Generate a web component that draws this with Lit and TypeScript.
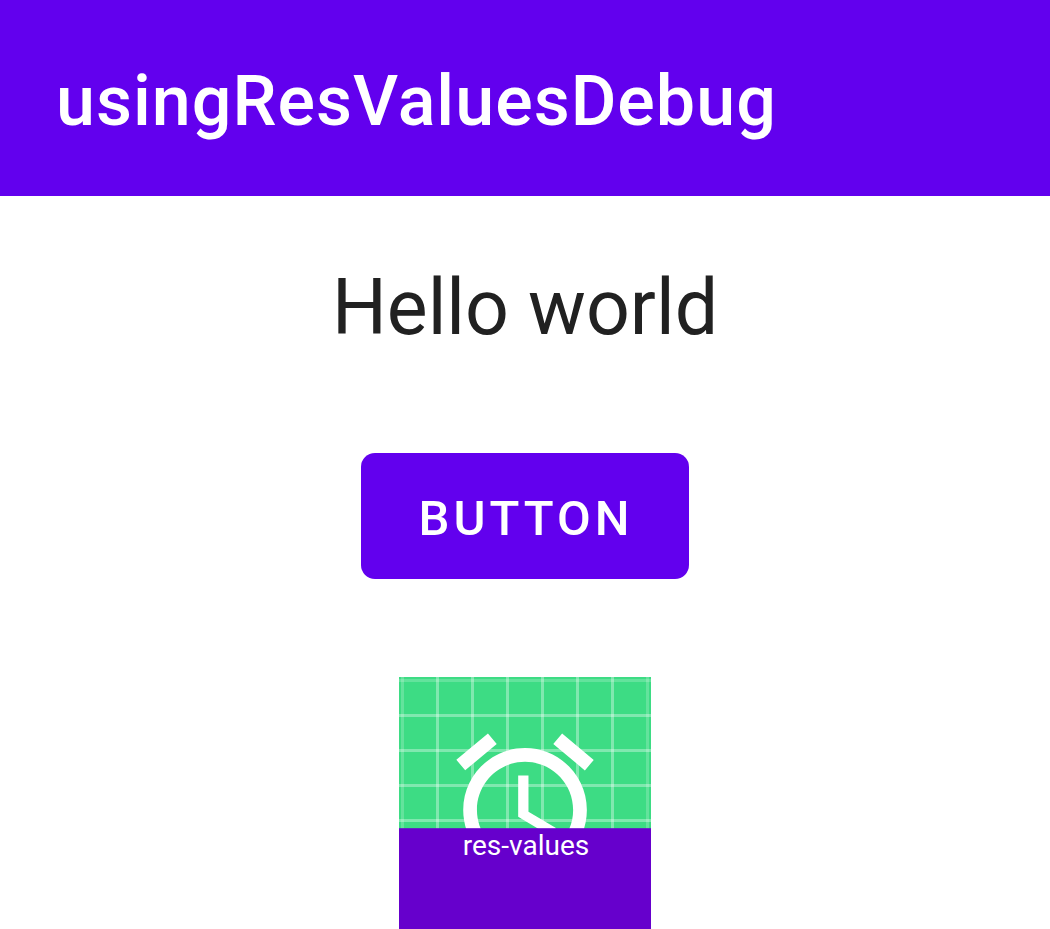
import { LitElement, html, svg, css } from "lit";
import { customElement } from "lit/decorators.js";

// Left or top edge of every stripe of the launcher background grid.
const GRID = [2, 37, 72, 107, 142, 177, 212, 247];

@customElement("launcher-icon")
export class LauncherIcon extends LitElement {
  static styles = css`
    :host {
      display: block;
      width: 252px;
    }
    .art {
      display: block;
      width: 100%;
    }
    .back {
      fill: #3ddc84;
    }
    .grid {
      fill: #ffffff;
      fill-opacity: 0.35;
    }
    .edge {
      fill-opacity: 0.2;
    }
    .clock {
      fill: #ffffff;
    }
    .ribbon {
      fill: #6600cc;
    }
    .label {
      fill: #ffffff;
      font-family: Roboto, "Noto Sans", sans-serif;
      font-size: 28px;
      text-anchor: middle;
    }
  `;

  render() {
    return html`
      <svg class="art" viewBox="0 0 252 252" role="img" aria-label="res-values launcher icon">
        <rect class="back" width="252" height="252" />
        <g class="grid">
          ${GRID.map((p, i) => {
            const edge = i === 0 || i === GRID.length - 1 ? "edge" : "";
            return svg`
              <rect class=${edge} x=${p} y="0" width="3" height="252" />
              <rect class=${edge} x="0" y=${p} width="252" height="3" />
            `;
          })}
        </g>
        <path
          class="clock"
          transform="translate(43.6 43.6) scale(6.87)"
          d="M22 5.72l-4.6-3.86-1.29 1.53 4.6 3.86L22 5.72zM7.88 3.39L6.6 1.86 2 5.71l1.29 1.53 4.59-3.85zM12.5 8H11v6l4.75 2.85.75-1.23-4-2.37V8zM12 4c-4.97 0-9 4.03-9 9s4.02 9 9 9c4.97 0 9-4.03 9-9s-4.03-9-9-9zm0 16c-3.87 0-7-3.13-7-7s3.13-7 7-7 7 3.13 7 7-3.13 7-7 7z"
        />
        <rect class="ribbon" y="151.2" width="252" height="100.8" />
        <text class="label" x="127" y="178">res-values</text>
      </svg>
    `;
  }
}

@customElement("app-root")
export class AppRoot extends LitElement {
  static styles = css`
    :host {
      display: block;
      font-family: Roboto, "Noto Sans", sans-serif;
      color: #212121;
      background: #ffffff;
    }
    .bar {
      background: #6200ee;
      color: #ffffff;
      padding: 53px 56px 47px;
    }
    .title {
      margin: 0;
      font-size: 70px;
      line-height: 96px;
      font-weight: 500;
      letter-spacing: 1px;
    }
    .content {
      display: flex;
      flex-direction: column;
      align-items: center;
      padding-top: 64px;
    }
    .greeting {
      margin: 0;
      font-size: 77px;
      line-height: 96px;
    }
    .action {
      margin: 97px 0 98px;
      padding: 34px 56px 28px 58px;
      border: 0;
      border-radius: 14px;
      background: #6200ee;
      color: #ffffff;
      font: inherit;
      font-size: 49px;
      line-height: 64px;
      font-weight: 500;
      letter-spacing: 4px;
      text-transform: uppercase;
    }
  `;

  render() {
    return html`
      <header class="bar"><h1 class="title">usingResValuesDebug</h1></header>
      <main class="content">
        <p class="greeting">Hello world</p>
        <button class="action" type="button">Button</button>
        <launcher-icon></launcher-icon>
      </main>
    `;
  }
}
